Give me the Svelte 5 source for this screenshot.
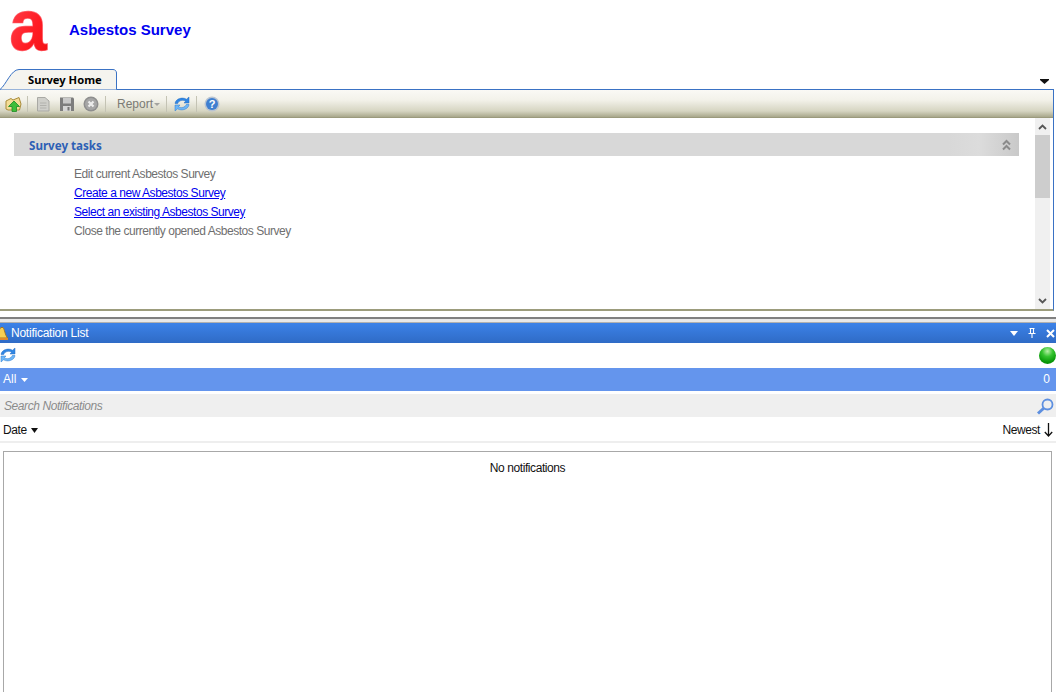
<script>
  const links = [
    { text: 'Edit current Asbestos Survey', on: false },
    { text: 'Create a new Asbestos Survey', on: true },
    { text: 'Select an existing Asbestos Survey', on: true },
    { text: 'Close the currently opened Asbestos Survey', on: false }
  ];
</script>

<svelte:head><title>Asbestos Survey</title></svelte:head>

{#snippet refresh()}
  <svg width="16" height="16" viewBox="0 0 16 16" aria-hidden="true">
    <path d="M1 7.5C1.5 3 8 .5 12.5 3.2L15 1V7H10L11.6 5.3C8.5 3.4 5 4.5 3.7 7.5Z" fill="#2f86e4" stroke="#2a6fc0" stroke-width=".5"/>
    <path d="M15 8.5C14.5 13 8 15.5 3.5 12.8L1 15V9H6L4.4 10.7C7.5 12.6 11 11.5 12.3 8.5Z" fill="#6db6f7" stroke="#2a78cc" stroke-width=".5"/>
  </svg>
{/snippet}

<div class="page">
  <header class="brand">
    <svg class="logo" width="69" height="60" viewBox="0 0 69 60" role="img" aria-label="a">
      <defs>
        <linearGradient id="logofill" x1="0" y1="0" x2="1" y2="1">
          <stop offset="0" stop-color="#ff4a56"/>
          <stop offset=".6" stop-color="#ff1c24"/>
          <stop offset="1" stop-color="#f01010"/>
        </linearGradient>
      </defs>
      <text x="0" y="0" transform="translate(9.5 49.5) scale(.93 1)" class="logotext" fill="url(#logofill)">a</text>
    </svg>
    <h1>Asbestos Survey</h1>
  </header>

  <div class="tabbar">
    <div class="tab">
      <svg class="tabshape" width="118" height="22" viewBox="0 0 118 22" aria-hidden="true">
        <path d="M0 21.5C6 17 11 1.5 19 1.5H113C115 1.5 116.5 3 116.5 5V21.5" fill="#f5f4ef" stroke="#3a72c4"/>
      </svg>
      <span>Survey Home</span>
    </div>
    <svg class="tabmenu" width="9" height="5" viewBox="0 0 9 5" aria-hidden="true">
      <path d="M0 0H9V1L4.5 5 0 1Z" fill="#111"/>
    </svg>
  </div>

  <div class="workspace">
    <div class="toolbar">
      <svg class="t-folder" width="17" height="17" viewBox="0 0 17 17" aria-hidden="true">
        <path d="M1 5L6 2.5 8 4 14 1.5 16 8 14.5 14H3L1 13Z" fill="#f4dd96" stroke="#a98b3a"/>
        <path d="M9 5L14.5 10.5H11.5V15.5H7V10.5H3.5Z" fill="#3fbe3a" stroke="#1d8a22" stroke-width=".8"/>
      </svg>
      <i class="sep s1"></i>
      <svg class="t-page" width="16" height="16" viewBox="0 0 16 16" aria-hidden="true">
        <path d="M2.5 1.5H10L14 5V15H2.5Z" fill="#cfcfca" stroke="#a9a9a4"/>
        <path d="M5 7H11.5M5 9.5H11.5M5 12H11.5" stroke="#b2b2ad"/>
      </svg>
      <svg class="t-btn" width="16" height="16" viewBox="0 0 16 16" aria-hidden="true">
        <path d="M1 1.5H14L15 2.5V15H1Z" fill="#7d7d7d"/>
        <rect x="4" y="2" width="8" height="5.5" fill="#c9c9c9"/>
        <rect x="4" y="10" width="8" height="5" fill="#d5d5d5"/>
        <rect x="8.5" y="11" width="2" height="3.5" fill="#777"/>
      </svg>
      <svg class="t-btn" width="16" height="16" viewBox="0 0 16 16" aria-hidden="true">
        <circle cx="8" cy="8" r="7.5" fill="#8e8e8e"/>
        <circle cx="8" cy="8" r="6" fill="#a6a6a6"/>
        <path d="M5.5 5.5L10.5 10.5M10.5 5.5L5.5 10.5" stroke="#ececec" stroke-width="2.2"/>
      </svg>
      <i class="sep s2"></i>
      <span class="report">Report<svg width="6" height="3" viewBox="0 0 6 3" aria-hidden="true"><path d="M0 0H6L3 3Z" fill="#a3a39f"/></svg></span>
      <i class="sep s3"></i>
      <span class="t-refresh">{@render refresh()}</span>
      <i class="sep s4"></i>
      <svg class="t-help" width="16" height="16" viewBox="0 0 16 16" aria-hidden="true">
        <circle cx="8" cy="8" r="7.5" fill="#b9c4d2"/>
        <circle cx="8" cy="8" r="6" fill="#3f7fd0"/>
        <text x="8" y="12" text-anchor="middle" class="help">?</text>
      </svg>
    </div>

    <div class="pane">
      <div class="tasks">
        <div class="taskhead">
          <h2>Survey tasks</h2>
          <svg width="9" height="12" viewBox="0 0 9 12" aria-hidden="true">
            <path d="M1 5.5L4.5 2 8 5.5M1 10.5L4.5 7 8 10.5" fill="none" stroke="#8a8a8a" stroke-width="2"/>
          </svg>
        </div>
        <ul>
          {#each links as l}
            <li class:on={l.on}>{l.text}</li>
          {/each}
        </ul>
      </div>
      <div class="scroll">
        <div class="sbtn"><svg width="9" height="6" viewBox="0 0 9 6" aria-hidden="true"><path d="M1 5L4.5 1.5 8 5" fill="none" stroke="#555" stroke-width="1.8"/></svg></div>
        <div class="thumb"></div>
        <div class="sbtn down"><svg width="9" height="6" viewBox="0 0 9 6" aria-hidden="true"><path d="M1 1L4.5 4.5 8 1" fill="none" stroke="#555" stroke-width="1.8"/></svg></div>
      </div>
    </div>
  </div>

  <div class="splitter"></div>

  <section class="notif">
    <div class="titlebar">
      <svg class="bell" width="8" height="15" viewBox="0 0 8 15" aria-hidden="true">
        <path d="M1 1.5H3C4.5 3 5 9 7.5 12H-4C-2 9 -1 3 1 1.5Z" fill="#f8cf52" stroke="#a86f12" stroke-width=".9"/>
        <rect x="-1" y="12" width="9" height="2" fill="#e08a2c"/>
      </svg>
      <span class="ttl">Notification List</span>
      <div class="winbtns">
        <svg width="8" height="5" viewBox="0 0 8 5" aria-hidden="true"><path d="M0 0H8L4 5Z" fill="#fff"/></svg>
        <svg width="8" height="10" viewBox="0 0 8 10" aria-hidden="true"><path d="M1.5 .5H6.5M2.5 .5V5.5M5.5 .5V5.5M.5 5.5H7.5M4 5.5V10" fill="none" stroke="#fff" stroke-width="1.1"/></svg>
        <svg width="9" height="9" viewBox="0 0 9 9" aria-hidden="true"><path d="M1 1L8 8M8 1L1 8" stroke="#fff" stroke-width="2"/></svg>
      </div>
    </div>
    <div class="actions">
      <span class="refresh">{@render refresh()}</span>
      <i class="status"></i>
    </div>
    <div class="filter">
      <span>All <svg width="7" height="4" viewBox="0 0 7 4" aria-hidden="true"><path d="M0 0H7L3.5 4Z" fill="#fff"/></svg></span>
      <span>0</span>
    </div>
    <div class="search">
      <span>Search Notifications</span>
      <svg width="18" height="17" viewBox="0 0 18 17" aria-hidden="true">
        <circle cx="11.5" cy="6.5" r="5" fill="none" stroke="#5d8fe0" stroke-width="1.8"/>
        <path d="M8 10L2 15.5" stroke="#5d8fe0" stroke-width="3"/>
      </svg>
    </div>
    <div class="sort">
      <span>Date <svg width="7" height="5" viewBox="0 0 7 5" aria-hidden="true"><path d="M0 0H7L3.5 5Z" fill="#111"/></svg></span>
      <span class="newest">Newest
        <svg width="9" height="14" viewBox="0 0 9 14" aria-hidden="true"><path d="M4.5 0V13M.8 9L4.5 13 8.2 9" fill="none" stroke="#111" stroke-width="1.3"/></svg>
      </span>
    </div>
    <div class="list">No notifications</div>
  </section>
</div>

<style>
  :global(body) { margin: 0; background: #fff; }
  .page {
    width: 1056px; height: 692px; overflow: hidden; background: #fff;
    display: flex; flex-direction: column;
    font: 12px/15px "Liberation Sans", Arial, sans-serif; letter-spacing: -.42px; color: #111;
  }
  .brand { height: 68px; flex: none; display: flex; align-items: flex-start; letter-spacing: 0; }
  .logo { display: block; flex: none; }
  .logotext {
    font: bold 72px "Liberation Sans", Arial, sans-serif;
    stroke: #ff6a74; stroke-width: 1.4px; paint-order: stroke;
  }
  h1 { margin: 21px 0 0; font: bold 15px/17px "Liberation Sans", Arial, sans-serif; color: #0000f0; }

  .tabbar { height: 22px; flex: none; display: flex; justify-content: space-between; }
  .tab {
    position: relative; width: 118px; height: 22px; box-sizing: border-box;
    padding: 4px 0 0 28px; font: bold 11.2px/15px "Noto Sans", Verdana, sans-serif; letter-spacing: 0; color: #000;
  }
  .tab span { position: relative; }
  .tabshape { position: absolute; left: 0; top: 0; }
  .tabmenu { margin: 11px 7px 0 0; }

  .workspace {
    flex: none; margin-top: -1px; height: 222px; box-sizing: border-box; margin-right: 2px;
    border-top: 1px solid #3a72c4; border-right: 1px solid #3a72c4;
    border-bottom: 2px solid #9c9c7c; display: flex; flex-direction: column;
  }
  .toolbar {
    height: 28px; flex: none; box-sizing: border-box; display: flex; align-items: center;
    padding: 0 0 0 5px;
    background: linear-gradient(#faf9f5 0, #f3f2ea 35%, #d6d5c2 75%, #a9a88c 96%, #8f8e70 100%);
  }
  .toolbar svg, .t-refresh { display: block; flex: none; }
  .sep { width: 1px; height: 16px; background: #c4c3b4; flex: none; }
  .s1 { margin-left: 5px; }
  .t-page { margin-left: 7px; }
  .t-btn { margin-left: 8px; }
  .s2 { margin-left: 6px; }
  .report {
    display: inline-flex; align-items: center; gap: 1px; margin-left: 11px;
    color: #7b7b74; letter-spacing: 0;
  }
  .s3 { margin-left: 6px; }
  .t-refresh { margin-left: 7px; height: 16px; }
  .s4 { margin-left: 6px; }
  .t-help { margin-left: 7px; }
  .help { font: bold 11px "Liberation Sans", Arial, sans-serif; fill: #fff; }

  .pane { flex: 1; min-height: 0; display: flex; background: #fff; }
  .tasks { flex: 1; min-width: 0; padding: 15px 16px 0 14px; }
  .taskhead {
    height: 23px; display: flex; align-items: center; justify-content: space-between;
    padding: 0 8px 0 15px; box-sizing: border-box;
    background: linear-gradient(90deg, #d8d8d8 0, #d8d8d8 93%, #dcdcdc 96%, #c9c9c9 100%);
  }
  h2 { margin: 0; padding-top: 1px; font: bold 11.6px/15px "Noto Sans", Verdana, sans-serif; letter-spacing: 0; color: #2d5fb5; }
  ul { list-style: none; margin: 9px 0 0; padding: 0 0 0 60px; }
  li { height: 19px; line-height: 19px; color: #6f6f6f; letter-spacing: -.46px; }
  li.on { color: #0000ee; text-decoration: underline; }

  .scroll { width: 15px; margin-right: 3px; flex: none; display: flex; flex-direction: column; background: #f0f0f0; }
  .sbtn { height: 17px; flex: none; display: flex; align-items: center; justify-content: center; }
  .down { margin-top: auto; }
  .thumb { height: 63px; background: #cdcdcd; flex: none; }

  .splitter {
    height: 12px; flex: none;
    background: linear-gradient(#fff 0 6px, #808080 6px 8px, #e8e8e8 8px 11px, #b0b0b0 11px);
  }

  .notif { flex: 1; min-height: 0; display: flex; flex-direction: column; }
  .titlebar {
    height: 20px; flex: none; display: flex; align-items: center; padding-right: 1px;
    background: linear-gradient(#3c82e8, #2f6bc6); color: #fff; letter-spacing: -.24px;
  }
  .bell { flex: none; overflow: visible; margin: 0 3px 0 0; }
  .ttl { flex: 1; }
  .winbtns { display: flex; align-items: center; gap: 10px; }
  .actions { height: 25px; flex: none; display: flex; align-items: center; justify-content: space-between; }
  .refresh { display: block; height: 16px; margin: -1px 0 0 0; }
  .status {
    width: 17px; height: 17px; border-radius: 50%; flex: none;
    background: radial-gradient(circle at 50% 25%, #b6f0a6 0, #35c32f 35%, #0a9a0a 70%, #067a06 100%);
  }
  .filter {
    height: 23px; flex: none; display: flex; align-items: center; justify-content: space-between;
    padding: 0 6px 0 3px; background: #6495ed; color: #fff; letter-spacing: 0;
  }
  .filter svg, .sort svg { vertical-align: 1px; margin-left: 1px; }
  .search {
    margin-top: 3px; height: 23px; flex: none; display: flex; align-items: center; justify-content: space-between;
    padding: 1px 2px 0 4px; box-sizing: border-box; background: #efefef; color: #8b8b8b; font-style: italic;
  }
  .sort {
    height: 26px; flex: none; display: flex; align-items: center; justify-content: space-between;
    padding: 2px 3px 0 3px; border-bottom: 2px solid #eee; box-sizing: border-box; color: #111;
  }
  .newest { display: inline-flex; align-items: center; gap: 4px; }
  .newest svg { margin: 0; vertical-align: 0; }
  .list {
    flex: 1; margin: 8px 4px 0 3px; border: 1px solid #a8a8a8; border-bottom: 0;
    text-align: center; padding-top: 9px;
  }
</style>
